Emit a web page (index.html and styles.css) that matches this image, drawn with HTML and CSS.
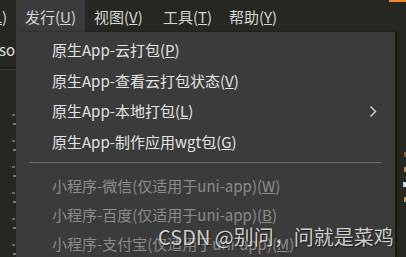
FILE: index.html
```html
<!DOCTYPE html>
<html lang="zh-CN">
<head>
  <meta charset="UTF-8" />
  <title>发行菜单</title>
  <link rel="stylesheet" href="styles.css">
</head>
<body>
  <div class="menubar">
    <span class="menu cut"><span>(<u>L</u>)</span></span>
    <span class="menu open">发行(<u>U</u>)</span>
    <span class="menu">视图(<u>V</u>)</span>
    <span class="menu narrow">工具(<u>T</u>)</span>
    <span class="menu">帮助(<u>Y</u>)</span>
    <span class="accent"></span>
  </div>

  <div class="editor">
    <div class="gutter">
      <div class="tab">so</div>
      <div class="tabline"></div>
      <div class="marks">
        <i></i><i></i><i></i><i></i><i></i><i></i>
      </div>
    </div>
    <div class="code"></div>
    <div class="minimap">
      <i class="m1"></i><i class="m2"></i><i class="m3"></i><i class="m4"></i>
    </div>

    <div class="dropdown">
      <div class="item">原生App-云打包(<u>P</u>)</div>
      <div class="item">原生App-查看云打包状态(<u>V</u>)</div>
      <div class="item sub">原生App-本地打包(<u>L</u>)
        <svg class="arrow" width="8" height="13" viewBox="0 0 8 13"><path d="M1.5 1.5 L6.5 6.5 L1.5 11.5" fill="none" stroke="#d8d8d8" stroke-width="1.4"/></svg>
      </div>
      <div class="item">原生App-制作应用wgt包(<u>G</u>)</div>
      <div class="sep"></div>
      <div class="item off">小程序-微信(仅适用于uni-app)(<u>W</u>)</div>
      <div class="item off">小程序-百度(仅适用于uni-app)(<u>B</u>)</div>
      <div class="item off">小程序-支付宝(仅适用于uni-app)(<u>M</u>)</div>
    </div>

    <div class="watermark">CSDN @别问，问就是菜鸡</div>
  </div>
</body>
</html>
```

FILE: styles.css
```css
html, body {
  margin: 0;
  height: 100%;
  background: #262721;
  font-family: "Noto Sans CJK SC", "Noto Sans", sans-serif;
  overflow: hidden;
}

.menubar {
  position: relative;
  display: flex;
  height: 32px;
  background: #262721;
  color: #d6d6d6;
  font-size: 15px;
}
.menu {
  display: flex;
  align-items: center;
  padding: 0 10px 0 9px;
  width: 50px;
  white-space: nowrap;
}
.menu.narrow { width: 47px; }
.menu.cut {
  width: 7px;
  padding: 0 9px 0 0;
  overflow: hidden;
  justify-content: flex-end;
}
.menu.open {
  background: #3b3b3b;
}
.accent {
  position: absolute;
  top: 0;
  right: 0;
  width: 17px;
  height: 2px;
  background: #f08c1e;
}

.editor {
  position: relative;
  display: flex;
  height: calc(100% - 32px);
}
.gutter {
  width: 16px;
  position: relative;
  overflow: hidden;
}
.tab {
  color: #e0e0e0;
  font-size: 15px;
  margin: 8px 0 0 -1px;
  line-height: 20px;
}
.tabline {
  margin-top: 7px;
  height: 2px;
  background: #1c1c18;
  border-bottom: 1px solid #3a3a34;
}
.marks {
  display: flex;
  flex-direction: column;
  gap: 24px;
  margin-top: 53px;
  align-items: flex-end;
}
.marks i {
  display: block;
  width: 3px;
  height: 2px;
  background: #77787a;
  box-shadow: -1px -9px 0 #5f6a78;
}
.code { flex: 1; }
.minimap {
  width: 9px;
  display: flex;
  flex-direction: column;
  align-items: flex-end;
  padding-top: 120px;
  gap: 10px;
}
.minimap i { display: block; width: 2px; height: 5px; background: #8a5a2a; }
.minimap .m2 { background: #b98a3a; }
.minimap .m3 { background: #c8d8f0; width: 3px; }
.minimap .m4 { background: #c89a40; }

.dropdown {
  position: absolute;
  left: 16px;
  top: 0;
  width: 379px;
  height: 100%;
  background: #3b3b3b;
  box-shadow: 2px 0 2px rgba(0, 0, 0, 0.45);
  padding-top: 3px;
  box-sizing: border-box;
}
.item {
  position: relative;
  height: 30.5px;
  line-height: 30px;
  padding-left: 36px;
  color: #e4e4e4;
  font-size: 15px;
  white-space: nowrap;
}
.item.off {
  color: #8c8c8c;
  height: 29px;
  line-height: 29px;
}
.arrow {
  position: absolute;
  right: 18px;
  top: 9px;
}
.sep {
  height: 1px;
  background: #6a6a6a;
  margin: 5px 14px 8px 13px;
}

.watermark {
  position: absolute;
  left: 158px;
  top: 190px;
  font-family: "Noto Sans CJK SC", "Liberation Sans", sans-serif;
  font-size: 20px;
  line-height: 29px;
  color: rgba(235, 235, 235, 0.85);
  text-shadow: 1px 1px 1px rgba(0, 0, 0, 0.6);
  white-space: nowrap;
}
```
